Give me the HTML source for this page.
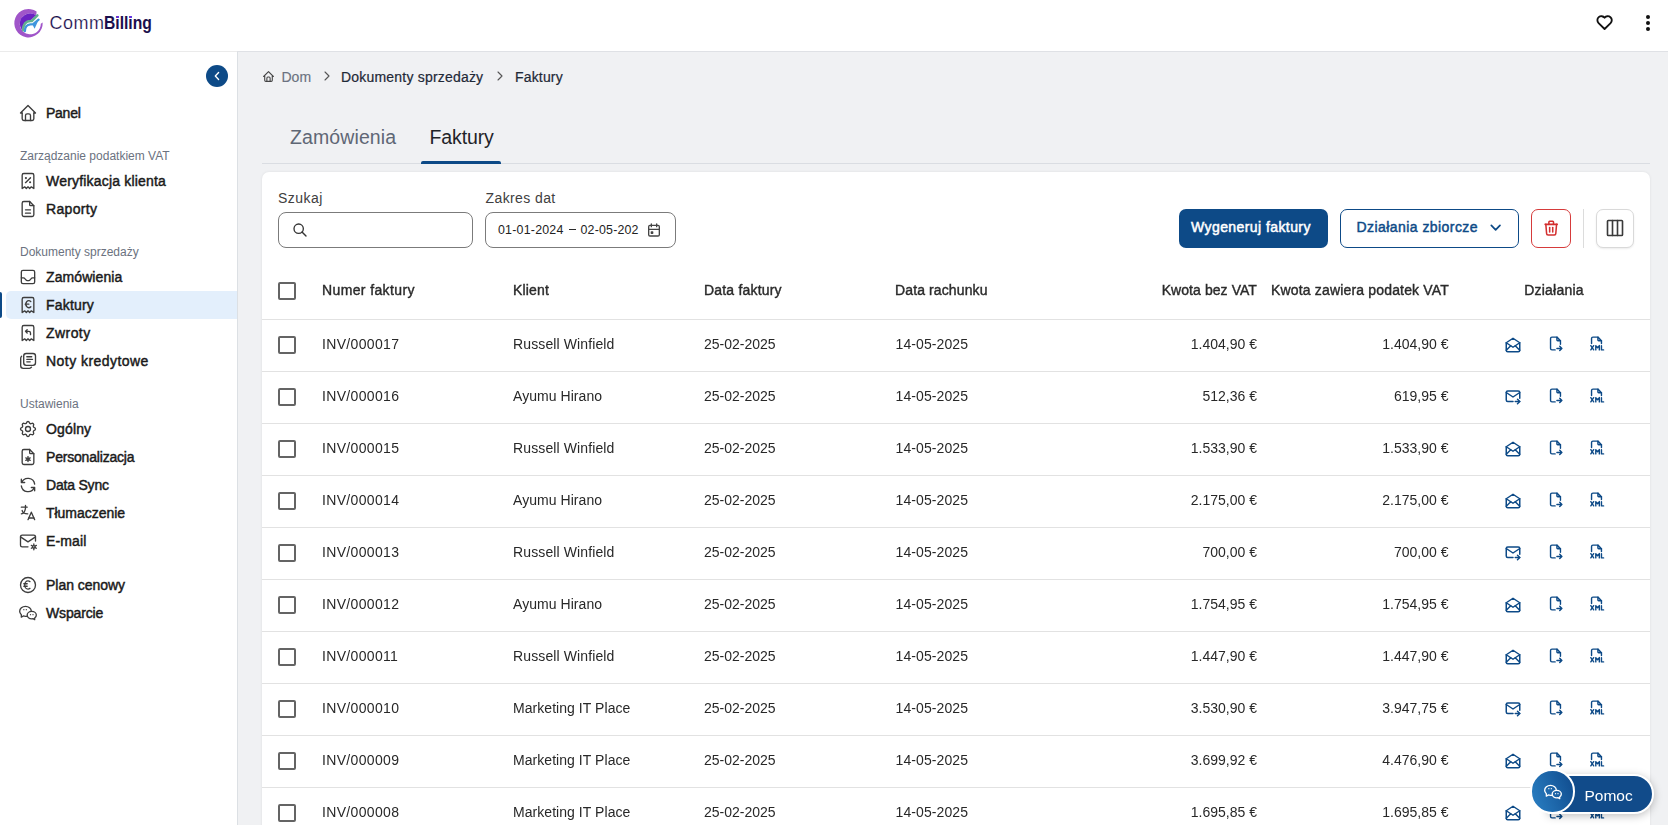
<!DOCTYPE html>
<html><head><meta charset="utf-8"><title>CommBilling - Faktury</title><style>
*{margin:0;padding:0}
html,body{width:1668px;height:825px;overflow:hidden;background:#f0f1f3;font-family:"Liberation Sans", sans-serif;position:relative}
.t{position:absolute;white-space:nowrap}
.ic{position:absolute;overflow:visible}
#hdr{position:absolute;left:0;top:0;width:1668px;height:51px;background:#fff;border-bottom:1px solid #dfe1e5}
.dot{position:absolute;width:4px;height:4px;border-radius:50%;background:#111}
#side{position:absolute;left:0;top:52px;width:237px;height:773px;background:#fff;border-right:1px solid #dce0e4}
#collapse{position:absolute;left:206px;top:65px;width:22px;height:22px;border-radius:50%;background:#0d4a87}
#active{position:absolute;left:6px;top:291px;width:231px;height:28px;background:#e3effc;border-radius:5px 0 0 5px}
#activebar{position:absolute;left:0;top:292px;width:1.5px;height:26px;background:#0d4a87;border-radius:0 2px 2px 0}
#card{position:absolute;left:262px;top:172px;width:1388px;height:700px;background:#fff;border-radius:7px;box-shadow:0 0 3px rgba(0,0,0,.08)}
.inp{position:absolute;top:212px;height:36px;box-sizing:border-box;border:1px solid #7b7b7b;border-radius:8px;background:#fff}
.btn{position:absolute;top:209px;height:39px;border-radius:7px}
.cb{position:absolute;left:278px;width:18px;height:18px;box-sizing:border-box;border:2px solid #646464;border-radius:2px}
.hl{position:absolute;left:262px;width:1388px;height:1px;background:#e2e2e2}
.xml span{position:absolute;left:0px;top:8px;font-size:8px;line-height:9px;font-weight:bold;color:#0d4a87;letter-spacing:-0.6px}
#pomoc{position:absolute;left:1548px;top:774px;width:101.5px;height:36px;border-radius:0 20px 20px 0;background:#114b8a;border:2px solid #fff;box-shadow:0 2px 8px rgba(0,0,0,.25)}
#pomoc span{position:absolute;left:34.5px;top:1.5px;line-height:36px;font-size:15.5px;color:#fff}
#pomocc{position:absolute;left:1530px;top:769px;width:40.5px;height:40.5px;border-radius:50%;border:2px solid #fff;background:linear-gradient(70deg,#2a80c4,#0f4a8c)}
</style></head>
<body>
<div id="hdr"></div>
<svg class="ic" style="left:10px;top:5px;width:40px;height:36px" viewBox="10 5 40 36">
<path d="M36.6 11.5 A14.2 14.2 0 1 0 42.7 22.6 L40.8 23.8 A10.5 10.5 0 1 1 36.3 15.2 Z" fill="#a055c9"/>
<path d="M36.3 15.2 A10.5 10.5 0 0 0 20.2 26.5 L22.3 31 C22.3 24.5 25.5 20.4 30.8 20.2 L36.8 14.8 Z" fill="#6b22c3"/>
<path d="M23.2 30.2 C23.2 24.5 26 21.2 30.6 21.1 L31.8 21 L37.4 15.3" stroke="#62b08f" stroke-width="2.5" stroke-linecap="round" fill="none"/>
<path d="M24.9 31.2 C25 27 27 24.6 30.3 24.4 L33.2 24.2 L38.6 19.6" stroke="#3f96dd" stroke-width="2.2" stroke-linecap="round" fill="none"/>
<path d="M38.9 19.2 L34.6 28.8 L32.4 24.6 Z" fill="#3f96dd"/>
</svg>
<div class="t" style="left:49.5px;top:10.5px;font-size:18px;line-height:24px;color:#1b0f4d;letter-spacing:0.5px;-webkit-text-stroke:0.2px #fff">Comm</div>
<div class="t" style="left:104px;top:10.5px;font-size:18px;line-height:24px;color:#1b0f4d;font-weight:bold;transform:scaleX(0.87);transform-origin:0 0">Billing</div>
<div style="position:absolute;left:116px;top:15.6px;width:2.8px;height:2.6px;border-radius:50%;background:#6a2ae0"></div><div style="position:absolute;left:129px;top:15.6px;width:2.8px;height:2.6px;border-radius:50%;background:#6a2ae0"></div>
<svg class="ic" style="left:1594.7px;top:13.3px;width:19.2px;height:19.2px" viewBox="0 0 24 24" fill="none" stroke="#111" stroke-width="2.3" stroke-linecap="round" stroke-linejoin="round"><path d="M19.5 12.572l-7.5 7.428l-7.5 -7.428a5 5 0 1 1 7.5 -6.566a5 5 0 1 1 7.5 6.572"/></svg>
<div class="dot" style="left:1646px;top:15px"></div><div class="dot" style="left:1646px;top:21px"></div><div class="dot" style="left:1646px;top:27px"></div>
<div id="side"></div><div style="position:absolute;left:0;top:51px;width:237px;height:1px;background:#ebebeb"></div>
<div id="collapse"><svg viewBox="0 0 22 22" style="position:absolute;left:0;top:0;width:22px;height:22px" fill="none" stroke="#fff" stroke-width="1.35" stroke-linecap="round" stroke-linejoin="round"><path d="M12.6 7.5L9.3 11L12.6 14.5"/></svg></div>
<div id="active"></div><div id="activebar"></div>
<svg class="ic" style="left:18px;top:103px;width:20px;height:20px" viewBox="0 0 24 24" fill="none" stroke="#3d3d3d" stroke-width="1.6" stroke-linecap="round" stroke-linejoin="round"><path d="M5 12l-2 0l9 -9l9 9l-2 0"/><path d="M5 12v7a2 2 0 0 0 2 2h10a2 2 0 0 0 2 -2v-7"/><path d="M9 21v-6a2 2 0 0 1 2 -2h2a2 2 0 0 1 2 2v6"/></svg>
<div class="t" style="left:46px;top:103.0px;font-size:14px;line-height:20px;color:#1a1a1a;font-weight:normal;-webkit-text-stroke:0.45px #1a1a1a;letter-spacing:-0.25px">Panel</div>
<svg class="ic" style="left:18px;top:171px;width:20px;height:20px" viewBox="0 0 24 24" fill="none" stroke="#3d3d3d" stroke-width="1.6" stroke-linecap="round" stroke-linejoin="round"><path d="M9 14l6 -6"/><path d="M9.5 8.5m-.5 0a.5 .5 0 1 0 1 0a.5 .5 0 1 0 -1 0"/><path d="M14.5 13.5m-.5 0a.5 .5 0 1 0 1 0a.5 .5 0 1 0 -1 0"/><path d="M5 21v-16a2 2 0 0 1 2 -2h10a2 2 0 0 1 2 2v16l-3 -2l-2 2l-2 -2l-2 2l-2 -2l-3 2"/></svg>
<div class="t" style="left:46px;top:171.0px;font-size:14px;line-height:20px;color:#1a1a1a;font-weight:normal;-webkit-text-stroke:0.45px #1a1a1a;letter-spacing:0.19px">Weryfikacja klienta</div>
<svg class="ic" style="left:18px;top:199px;width:20px;height:20px" viewBox="0 0 24 24" fill="none" stroke="#3d3d3d" stroke-width="1.6" stroke-linecap="round" stroke-linejoin="round"><path d="M14 3v4a1 1 0 0 0 1 1h4"/><path d="M17 21h-10a2 2 0 0 1 -2 -2v-14a2 2 0 0 1 2 -2h7l5 5v11a2 2 0 0 1 -2 2z"/><path d="M9 17h6"/><path d="M9 13h6"/></svg>
<div class="t" style="left:46px;top:199.0px;font-size:14px;line-height:20px;color:#1a1a1a;font-weight:normal;-webkit-text-stroke:0.45px #1a1a1a;letter-spacing:0.33px">Raporty</div>
<svg class="ic" style="left:18px;top:267px;width:20px;height:20px" viewBox="0 0 24 24" fill="none" stroke="#3d3d3d" stroke-width="1.6" stroke-linecap="round" stroke-linejoin="round"><path d="M4 6a2 2 0 0 1 2 -2h12a2 2 0 0 1 2 2v12a2 2 0 0 1 -2 2h-12a2 2 0 0 1 -2 -2z"/><path d="M4 13h2.5c1 0 1.5 .5 2 1.2l1 1.3c.4 .5 .9 .8 1.5 .8h2c.6 0 1.1 -.3 1.5 -.8l1 -1.3c.5 -.7 1 -1.2 2 -1.2h2.5"/></svg>
<div class="t" style="left:46px;top:267.0px;font-size:14px;line-height:20px;color:#1a1a1a;font-weight:normal;-webkit-text-stroke:0.45px #1a1a1a;letter-spacing:0.09px">Zamówienia</div>
<svg class="ic" style="left:18px;top:295px;width:20px;height:20px" viewBox="0 0 24 24" fill="none" stroke="#3d3d3d" stroke-width="1.6" stroke-linecap="round" stroke-linejoin="round"><path d="M5 21v-16a2 2 0 0 1 2 -2h10a2 2 0 0 1 2 2v16l-3 -2l-2 2l-2 -2l-2 2l-2 -2l-3 2"/><path d="M15.4 7.9A3.5 4.3 0 1 0 15.4 14.1"/><path d="M8.7 11H13"/></svg>
<div class="t" style="left:46px;top:295.0px;font-size:14px;line-height:20px;color:#1a1a1a;font-weight:normal;-webkit-text-stroke:0.45px #1a1a1a;letter-spacing:0.18px">Faktury</div>
<svg class="ic" style="left:18px;top:323px;width:20px;height:20px" viewBox="0 0 24 24" fill="none" stroke="#3d3d3d" stroke-width="1.6" stroke-linecap="round" stroke-linejoin="round"><path d="M5 21v-16a2 2 0 0 1 2 -2h10a2 2 0 0 1 2 2v16l-3 -2l-2 2l-2 -2l-2 2l-2 -2l-3 2"/><path d="M15 14v-2a2 2 0 0 0 -2 -2h-4l2 -2m0 4l-2 -2"/></svg>
<div class="t" style="left:46px;top:323.0px;font-size:14px;line-height:20px;color:#1a1a1a;font-weight:normal;-webkit-text-stroke:0.45px #1a1a1a;letter-spacing:0.44px">Zwroty</div>
<svg class="ic" style="left:16px;top:349px;width:24px;height:24px" viewBox="0 0 24 24" fill="none" stroke="#3d3d3d" stroke-width="1.35" stroke-linecap="round" stroke-linejoin="round"><path d="M10.2 4.5H17A2.5 2.5 0 0 1 19.5 7V13.8A2.5 2.5 0 0 1 17 16.3H10.2A2.5 2.5 0 0 1 7.7 13.8V7A2.5 2.5 0 0 1 10.2 4.5Z"/><path d="M5.6 7.2A2.6 2.6 0 0 0 4.7 9.2V16.8A2.5 2.5 0 0 0 7.2 19.3H13.1A2.5 2.5 0 0 0 15.5 18.2"/><path d="M10.8 7.7H15.7M10.8 10.3H16.5M10.8 12.8H14.2"/></svg>
<div class="t" style="left:46px;top:351.0px;font-size:14px;line-height:20px;color:#1a1a1a;font-weight:normal;-webkit-text-stroke:0.45px #1a1a1a;letter-spacing:0.45px">Noty kredytowe</div>
<svg class="ic" style="left:18px;top:419px;width:20px;height:20px" viewBox="0 0 24 24" fill="none" stroke="#3d3d3d" stroke-width="1.6" stroke-linecap="round" stroke-linejoin="round"><path d="M10.325 4.317c.426 -1.756 2.924 -1.756 3.35 0a1.724 1.724 0 0 0 2.573 1.066c1.543 -.94 3.31 .826 2.37 2.37a1.724 1.724 0 0 0 1.065 2.572c1.756 .426 1.756 2.924 0 3.35a1.724 1.724 0 0 0 -1.066 2.573c.94 1.543 -.826 3.31 -2.37 2.37a1.724 1.724 0 0 0 -2.572 1.065c-.426 1.756 -2.924 1.756 -3.35 0a1.724 1.724 0 0 0 -2.573 -1.066c-1.543 .94 -3.31 -.826 -2.37 -2.37a1.724 1.724 0 0 0 -1.065 -2.572c-1.756 -.426 -1.756 -2.924 0 -3.35a1.724 1.724 0 0 0 1.066 -2.573c-.94 -1.543 .826 -3.31 2.37 -2.37c1 .608 2.296 .07 2.572 -1.065z"/><path d="M9 12a3 3 0 1 0 6 0a3 3 0 0 0 -6 0"/></svg>
<div class="t" style="left:46px;top:419.0px;font-size:14px;line-height:20px;color:#1a1a1a;font-weight:normal;-webkit-text-stroke:0.45px #1a1a1a;letter-spacing:0.14px">Ogólny</div>
<svg class="ic" style="left:18px;top:447px;width:20px;height:20px" viewBox="0 0 24 24" fill="none" stroke="#3d3d3d" stroke-width="1.6" stroke-linecap="round" stroke-linejoin="round"><path d="M14 3v4a1 1 0 0 0 1 1h4"/><path d="M17 21h-10a2 2 0 0 1 -2 -2v-14a2 2 0 0 1 2 -2h7l5 5v11a2 2 0 0 1 -2 2z"/><path d="M12 14.5m-1.2 0a1.2 1.2 0 1 0 2.4 0a1.2 1.2 0 1 0 -2.4 0"/><path d="M12 11.5v1.5"/><path d="M12 16v1.5"/><path d="M14.6 13l-1.3 .75"/><path d="M10.7 15.25l-1.3 .75"/><path d="M14.6 16l-1.3 -.75"/><path d="M10.7 13.75l-1.3 -.75"/></svg>
<div class="t" style="left:46px;top:447.0px;font-size:14px;line-height:20px;color:#1a1a1a;font-weight:normal;-webkit-text-stroke:0.45px #1a1a1a;letter-spacing:-0.19px">Personalizacja</div>
<svg class="ic" style="left:18px;top:475px;width:20px;height:20px" viewBox="0 0 24 24" fill="none" stroke="#3d3d3d" stroke-width="1.6" stroke-linecap="round" stroke-linejoin="round"><path d="M20 11a8.1 8.1 0 0 0 -15.5 -2m-.5 -4v4h4"/><path d="M4 13a8.1 8.1 0 0 0 15.5 2m.5 4v-4h-4"/></svg>
<div class="t" style="left:46px;top:475.0px;font-size:14px;line-height:20px;color:#1a1a1a;font-weight:normal;-webkit-text-stroke:0.45px #1a1a1a;letter-spacing:-0.2px">Data Sync</div>
<svg class="ic" style="left:18px;top:503px;width:20px;height:20px" viewBox="0 0 24 24" fill="none" stroke="#3d3d3d" stroke-width="1.6" stroke-linecap="round" stroke-linejoin="round"><path d="M4 5h7"/><path d="M9 3v2c0 4.418 -2.239 8 -5 8"/><path d="M5 9c0 2.144 2.952 3.908 6.7 4"/><path d="M12 20l4 -9l4 9"/><path d="M19.1 18h-6.2"/></svg>
<div class="t" style="left:46px;top:503.0px;font-size:14px;line-height:20px;color:#1a1a1a;font-weight:normal;-webkit-text-stroke:0.45px #1a1a1a;letter-spacing:-0.03px">Tłumaczenie</div>
<svg class="ic" style="left:18px;top:531px;width:20px;height:20px" viewBox="0 0 24 24" fill="none" stroke="#3d3d3d" stroke-width="1.6" stroke-linecap="round" stroke-linejoin="round"><path d="M12 19h-7a2 2 0 0 1 -2 -2v-10a2 2 0 0 1 2 -2h14a2 2 0 0 1 2 2v5"/><path d="M3 7l9 6l9 -6"/><path d="M19 19m-1.5 0a1.5 1.5 0 1 0 3 0a1.5 1.5 0 1 0 -3 0"/><path d="M19 15.5v1.5"/><path d="M19 21v1.5"/><path d="M22 17.25l-1.3 .75"/><path d="M17.3 20l-1.3 .75"/><path d="M16 17.25l1.3 .75"/><path d="M20.7 20l1.3 .75"/></svg>
<div class="t" style="left:46px;top:531.0px;font-size:14px;line-height:20px;color:#1a1a1a;font-weight:normal;-webkit-text-stroke:0.45px #1a1a1a;letter-spacing:0.14px">E-mail</div>
<svg class="ic" style="left:18px;top:575px;width:20px;height:20px" viewBox="0 0 24 24" fill="none" stroke="#3d3d3d" stroke-width="1.6" stroke-linecap="round" stroke-linejoin="round"><path d="M12 12m-9 0a9 9 0 1 0 18 0a9 9 0 1 0 -18 0"/><path d="M14.4 8c-.67 -.63 -1.5 -1 -2.4 -1c-2.21 0 -4 2.239 -4 5s1.79 5 4 5c.9 0 1.73 -.37 2.4 -1"/><path d="M7 10.5h4"/><path d="M7 13.5h4"/></svg>
<div class="t" style="left:46px;top:575.0px;font-size:14px;line-height:20px;color:#1a1a1a;font-weight:normal;-webkit-text-stroke:0.45px #1a1a1a;letter-spacing:-0.03px">Plan cenowy</div>
<svg class="ic" style="left:18px;top:603px;width:20px;height:20px" viewBox="0 0 24 24" fill="none" stroke="#3d3d3d" stroke-width="1.6" stroke-linecap="round" stroke-linejoin="round"><path d="M16.5 10c3.038 0 5.5 2.015 5.5 4.5c0 1.397 -.778 2.645 -2 3.47l0 2.03l-1.964 -1.178a6.649 6.649 0 0 1 -1.536 .178c-3.038 0 -5.5 -2.015 -5.5 -4.5s2.462 -4.5 5.5 -4.5z"/><path d="M11.197 15.698c-.69 .196 -1.43 .302 -2.197 .302a8.008 8.008 0 0 1 -2.612 -.432l-2.388 1.432v-2.801c-1.237 -1.082 -2 -2.564 -2 -4.199c0 -3.314 3.134 -6 7 -6c3.782 0 6.863 2.57 7 5.785l0 .233"/><path d="M10 8h.01"/><path d="M7 8h.01"/><path d="M15 14h.01"/><path d="M18 14h.01"/></svg>
<div class="t" style="left:46px;top:603.0px;font-size:14px;line-height:20px;color:#1a1a1a;font-weight:normal;-webkit-text-stroke:0.45px #1a1a1a;letter-spacing:-0.14px">Wsparcie</div>
<div class="t" style="left:20px;top:148.0px;font-size:12px;line-height:16px;color:#6b7280;font-weight:normal;">Zarządzanie podatkiem VAT</div>
<div class="t" style="left:20px;top:244.0px;font-size:12px;line-height:16px;color:#6b7280;font-weight:normal;">Dokumenty sprzedaży</div>
<div class="t" style="left:20px;top:396.0px;font-size:12px;line-height:16px;color:#6b7280;font-weight:normal;">Ustawienia</div>
<svg class="ic" style="left:261.5px;top:69.5px;width:13px;height:13px" viewBox="0 0 24 24" fill="none" stroke="#444" stroke-width="2" stroke-linecap="round" stroke-linejoin="round"><path d="M5 12l-2 0l9 -9l9 9l-2 0"/><path d="M5 12v7a2 2 0 0 0 2 2h10a2 2 0 0 0 2 -2v-7"/><path d="M9 21v-6a2 2 0 0 1 2 -2h2a2 2 0 0 1 2 2v6"/></svg>
<div class="t" style="left:281.5px;top:66.5px;font-size:14px;line-height:20px;color:#6b7280;font-weight:normal;-webkit-text-stroke:0.15px #6b7280">Dom</div>
<svg class="ic" style="left:318.5px;top:68px;width:16px;height:16px" viewBox="0 0 24 24" fill="none" stroke="#555" stroke-width="1.6" stroke-linecap="round" stroke-linejoin="round"><path d="M9 6l6 6l-6 6"/></svg>
<div class="t" style="left:341px;top:66.5px;font-size:14px;line-height:20px;color:#1f2937;font-weight:normal;letter-spacing:0.2px;-webkit-text-stroke:0.2px #1f2937">Dokumenty sprzedaży</div>
<svg class="ic" style="left:491.5px;top:68px;width:16px;height:16px" viewBox="0 0 24 24" fill="none" stroke="#555" stroke-width="1.6" stroke-linecap="round" stroke-linejoin="round"><path d="M9 6l6 6l-6 6"/></svg>
<div class="t" style="left:515px;top:66.5px;font-size:14px;line-height:20px;color:#1f2937;font-weight:normal;letter-spacing:0.17px;-webkit-text-stroke:0.2px #1f2937">Faktury</div>
<div style="position:absolute;left:262px;top:163px;width:1388px;height:1px;background:#dadde2"></div>
<div class="t" style="left:290px;top:124.0px;font-size:19.5px;line-height:26px;color:#5f6775;font-weight:normal;letter-spacing:0.11px">Zamówienia</div>
<div class="t" style="left:429.5px;top:124.0px;font-size:19.5px;line-height:26px;color:#1f2328;font-weight:normal;letter-spacing:-0.12px">Faktury</div>
<div style="position:absolute;left:421px;top:161px;width:80px;height:3px;background:#0d4a87;border-radius:2px 2px 0 0"></div>
<div id="card"></div>
<div class="t" style="left:278px;top:188.0px;font-size:14px;line-height:20px;color:#404040;font-weight:normal;letter-spacing:0.46px">Szukaj</div>
<div class="inp" style="left:278px;width:195px"></div>
<svg class="ic" style="left:292px;top:222px;width:16px;height:16px" viewBox="0 0 24 24" fill="none" stroke="#333" stroke-width="2" stroke-linecap="round" stroke-linejoin="round"><path d="M10 10m-7 0a7 7 0 1 0 14 0a7 7 0 1 0 -14 0"/><path d="M21 21l-6 -6"/></svg>
<div class="t" style="left:485.5px;top:188.0px;font-size:14px;line-height:20px;color:#404040;font-weight:normal;letter-spacing:0.4px">Zakres dat</div>
<div class="inp" style="left:485px;width:191px"></div>
<div class="t" style="left:498px;top:220.5px;font-size:12.4px;line-height:18px;color:#222;font-weight:normal;letter-spacing:0.22px">01-01-2024</div>
<div style="position:absolute;left:568.5px;top:228.6px;width:7.5px;height:1.4px;background:#2a2a2a"></div>
<div class="t" style="left:580.5px;top:220.5px;font-size:12.4px;line-height:18px;color:#222;font-weight:normal;letter-spacing:0.19px">02-05-202</div>
<svg class="ic" style="left:646px;top:222px;width:16px;height:16px" viewBox="0 0 24 24" fill="none" stroke="#444" stroke-width="2" stroke-linecap="round" stroke-linejoin="round"><path d="M4 7a2 2 0 0 1 2 -2h12a2 2 0 0 1 2 2v12a2 2 0 0 1 -2 2h-12a2 2 0 0 1 -2 -2z"/><path d="M16 3l0 4"/><path d="M8 3l0 4"/><path d="M4 11l16 0"/><path d="M8 15h2v2h-2z"/></svg>
<div class="btn" style="left:1179px;width:149px;background:#0d4a87"></div>
<div class="t" style="left:1191px;top:217.0px;font-size:14px;line-height:20px;color:#fff;font-weight:normal;letter-spacing:0.42px;-webkit-text-stroke:0.5px #fff">Wygeneruj faktury</div>
<div class="btn" style="left:1340px;width:179px;border:1.3px solid #0d4a87;box-sizing:border-box;background:#fff"></div>
<div class="t" style="left:1356.5px;top:217.0px;font-size:14px;line-height:20px;color:#0d4a87;font-weight:normal;letter-spacing:0.44px;-webkit-text-stroke:0.45px #0d4a87">Działania zbiorcze</div>
<svg class="ic" style="left:1487.4px;top:219.2px;width:17.3px;height:17.3px" viewBox="0 0 24 24" fill="none" stroke="#0d4a87" stroke-width="2.4" stroke-linecap="round" stroke-linejoin="round"><path d="M6 9l6 6l6 -6"/></svg>
<div class="btn" style="left:1531px;width:40px;border:1px solid #d63b3b;box-sizing:border-box;background:#fff"></div>
<svg class="ic" style="left:1541.8px;top:218.8px;width:18.4px;height:18.4px" viewBox="0 0 24 24" fill="none" stroke="#d32f2f" stroke-width="2" stroke-linecap="round" stroke-linejoin="round"><path d="M4 7l16 0"/><path d="M10 11l0 6"/><path d="M14 11l0 6"/><path d="M5 7l1 12a2 2 0 0 0 2 2h8a2 2 0 0 0 2 -2l1 -12"/><path d="M9 7v-3a1 1 0 0 1 1 -1h4a1 1 0 0 1 1 1v3"/></svg>
<div style="position:absolute;left:1583px;top:209px;width:1px;height:39px;background:#dcdcdc"></div>
<div class="btn" style="left:1596px;width:38px;border:1px solid #d9d9d9;box-sizing:border-box;background:#fff;box-shadow:0 1px 2px rgba(0,0,0,.08)"></div>
<svg class="ic" style="left:1605.1px;top:218.2px;width:20px;height:20px" viewBox="0 0 24 24" fill="none" stroke="#3a3a3a" stroke-width="1.95" stroke-linecap="round" stroke-linejoin="round"><path d="M4 3h16a1 1 0 0 1 1 1v16a1 1 0 0 1 -1 1h-16a1 1 0 0 1 -1 -1v-16a1 1 0 0 1 1 -1z"/><path d="M9 3v18"/><path d="M15 3v18"/></svg>
<div style="position:absolute;left:0;top:0;width:1668px;height:825px;will-change:transform">
<div class="cb" style="top:282px"></div>
<div class="t" style="left:322px;top:280.0px;font-size:14px;line-height:20px;color:#2b2b2b;font-weight:normal;-webkit-text-stroke:0.4px #2b2b2b;letter-spacing:0.38px">Numer faktury</div>
<div class="t" style="left:513px;top:280.0px;font-size:14px;line-height:20px;color:#2b2b2b;font-weight:normal;-webkit-text-stroke:0.4px #2b2b2b;letter-spacing:0.18px">Klient</div>
<div class="t" style="left:704px;top:280.0px;font-size:14px;line-height:20px;color:#2b2b2b;font-weight:normal;-webkit-text-stroke:0.4px #2b2b2b;letter-spacing:0.19px">Data faktury</div>
<div class="t" style="left:895px;top:280.0px;font-size:14px;line-height:20px;color:#2b2b2b;font-weight:normal;-webkit-text-stroke:0.4px #2b2b2b;letter-spacing:0.12px">Data rachunku</div>
<div class="t" style="right:411px;top:280.0px;font-size:14px;line-height:20px;color:#2b2b2b;font-weight:normal;-webkit-text-stroke:0.4px #2b2b2b;letter-spacing:0.07px">Kwota bez VAT</div>
<div class="t" style="right:219px;top:280.0px;font-size:14px;line-height:20px;color:#2b2b2b;font-weight:normal;-webkit-text-stroke:0.4px #2b2b2b;letter-spacing:0.17px">Kwota zawiera podatek VAT</div>
<div class="t" style="left:1404px;width:300px;text-align:center;top:280.0px;font-size:14px;line-height:20px;color:#2b2b2b;font-weight:normal;-webkit-text-stroke:0.4px #2b2b2b;letter-spacing:0.22px">Działania</div>
<div class="hl" style="top:319px"></div>
<div class="cb" style="top:336px"></div>
<div class="t" style="left:322px;top:334.0px;font-size:14px;line-height:20px;color:#282828;font-weight:normal;letter-spacing:0.33px">INV/000017</div>
<div class="t" style="left:513px;top:334.0px;font-size:14px;line-height:20px;color:#282828;font-weight:normal;letter-spacing:0.12px">Russell Winfield</div>
<div class="t" style="left:704px;top:334.0px;font-size:14px;line-height:20px;color:#282828;font-weight:normal;">25-02-2025</div>
<div class="t" style="left:895.5px;top:334.0px;font-size:14px;line-height:20px;color:#282828;font-weight:normal;letter-spacing:0.1px">14-05-2025</div>
<div class="t" style="right:411px;top:334.0px;font-size:14px;line-height:20px;color:#282828;font-weight:normal;">1.404,90 €</div>
<div class="t" style="right:219.5px;top:334.0px;font-size:14px;line-height:20px;color:#282828;font-weight:normal;">1.404,90 €</div>
<svg class="ic" style="left:1504px;top:336px;width:18px;height:18px" viewBox="0 0 24 24" fill="none" stroke="#0d4a87" stroke-width="2" stroke-linecap="round" stroke-linejoin="round"><path d="M3 9l9 6l9 -6l-9 -6l-9 6"/><path d="M21 9v10a2 2 0 0 1 -2 2h-14a2 2 0 0 1 -2 -2v-10"/><path d="M3 19l6 -6"/><path d="M15 13l6 6"/></svg>
<svg class="ic" style="left:1547.1px;top:334.7px;width:17px;height:17px" viewBox="0 0 24 24" fill="none" stroke="#0d4a87" stroke-width="2" stroke-linecap="round" stroke-linejoin="round"><path d="M14 3v4a1 1 0 0 0 1 1h4"/><path d="M11.5 21h-4.5a2 2 0 0 1 -2 -2v-14a2 2 0 0 1 2 -2h7l5 5v5m-5 6h7m-3 -3l3 3l-3 3"/></svg>
<svg class="ic" style="left:1588.2px;top:334.7px;width:17px;height:17px" viewBox="0 0 24 24" fill="none" stroke="#0d4a87" stroke-width="2" stroke-linecap="round" stroke-linejoin="round"><path d="M14 3v4a1 1 0 0 0 1 1h4"/><path d="M5 12v-7a2 2 0 0 1 2 -2h7l5 5v4"/><path d="M4 15l4 6"/><path d="M4 21l4 -6"/><path d="M19 15v6h3"/><path d="M11 21v-6l2.5 3l2.5 -3v6"/></svg>
<div class="hl" style="top:371px"></div>
<div class="cb" style="top:388px"></div>
<div class="t" style="left:322px;top:386.0px;font-size:14px;line-height:20px;color:#282828;font-weight:normal;letter-spacing:0.33px">INV/000016</div>
<div class="t" style="left:513px;top:386.0px;font-size:14px;line-height:20px;color:#282828;font-weight:normal;letter-spacing:0.05px">Ayumu Hirano</div>
<div class="t" style="left:704px;top:386.0px;font-size:14px;line-height:20px;color:#282828;font-weight:normal;">25-02-2025</div>
<div class="t" style="left:895.5px;top:386.0px;font-size:14px;line-height:20px;color:#282828;font-weight:normal;letter-spacing:0.1px">14-05-2025</div>
<div class="t" style="right:411px;top:386.0px;font-size:14px;line-height:20px;color:#282828;font-weight:normal;">512,36 €</div>
<div class="t" style="right:219.5px;top:386.0px;font-size:14px;line-height:20px;color:#282828;font-weight:normal;">619,95 €</div>
<svg class="ic" style="left:1504px;top:388px;width:18px;height:18px" viewBox="0 0 24 24" fill="none" stroke="#0d4a87" stroke-width="2" stroke-linecap="round" stroke-linejoin="round"><path d="M12 18h-7a2 2 0 0 1 -2 -2v-10a2 2 0 0 1 2 -2h14a2 2 0 0 1 2 2v7.5"/><path d="M3 6l9 6l9 -6"/><path d="M15 18h6"/><path d="M18 15l3 3l-3 3"/></svg>
<svg class="ic" style="left:1547.1px;top:386.7px;width:17px;height:17px" viewBox="0 0 24 24" fill="none" stroke="#0d4a87" stroke-width="2" stroke-linecap="round" stroke-linejoin="round"><path d="M14 3v4a1 1 0 0 0 1 1h4"/><path d="M11.5 21h-4.5a2 2 0 0 1 -2 -2v-14a2 2 0 0 1 2 -2h7l5 5v5m-5 6h7m-3 -3l3 3l-3 3"/></svg>
<svg class="ic" style="left:1588.2px;top:386.7px;width:17px;height:17px" viewBox="0 0 24 24" fill="none" stroke="#0d4a87" stroke-width="2" stroke-linecap="round" stroke-linejoin="round"><path d="M14 3v4a1 1 0 0 0 1 1h4"/><path d="M5 12v-7a2 2 0 0 1 2 -2h7l5 5v4"/><path d="M4 15l4 6"/><path d="M4 21l4 -6"/><path d="M19 15v6h3"/><path d="M11 21v-6l2.5 3l2.5 -3v6"/></svg>
<div class="hl" style="top:423px"></div>
<div class="cb" style="top:440px"></div>
<div class="t" style="left:322px;top:438.0px;font-size:14px;line-height:20px;color:#282828;font-weight:normal;letter-spacing:0.33px">INV/000015</div>
<div class="t" style="left:513px;top:438.0px;font-size:14px;line-height:20px;color:#282828;font-weight:normal;letter-spacing:0.12px">Russell Winfield</div>
<div class="t" style="left:704px;top:438.0px;font-size:14px;line-height:20px;color:#282828;font-weight:normal;">25-02-2025</div>
<div class="t" style="left:895.5px;top:438.0px;font-size:14px;line-height:20px;color:#282828;font-weight:normal;letter-spacing:0.1px">14-05-2025</div>
<div class="t" style="right:411px;top:438.0px;font-size:14px;line-height:20px;color:#282828;font-weight:normal;">1.533,90 €</div>
<div class="t" style="right:219.5px;top:438.0px;font-size:14px;line-height:20px;color:#282828;font-weight:normal;">1.533,90 €</div>
<svg class="ic" style="left:1504px;top:440px;width:18px;height:18px" viewBox="0 0 24 24" fill="none" stroke="#0d4a87" stroke-width="2" stroke-linecap="round" stroke-linejoin="round"><path d="M3 9l9 6l9 -6l-9 -6l-9 6"/><path d="M21 9v10a2 2 0 0 1 -2 2h-14a2 2 0 0 1 -2 -2v-10"/><path d="M3 19l6 -6"/><path d="M15 13l6 6"/></svg>
<svg class="ic" style="left:1547.1px;top:438.7px;width:17px;height:17px" viewBox="0 0 24 24" fill="none" stroke="#0d4a87" stroke-width="2" stroke-linecap="round" stroke-linejoin="round"><path d="M14 3v4a1 1 0 0 0 1 1h4"/><path d="M11.5 21h-4.5a2 2 0 0 1 -2 -2v-14a2 2 0 0 1 2 -2h7l5 5v5m-5 6h7m-3 -3l3 3l-3 3"/></svg>
<svg class="ic" style="left:1588.2px;top:438.7px;width:17px;height:17px" viewBox="0 0 24 24" fill="none" stroke="#0d4a87" stroke-width="2" stroke-linecap="round" stroke-linejoin="round"><path d="M14 3v4a1 1 0 0 0 1 1h4"/><path d="M5 12v-7a2 2 0 0 1 2 -2h7l5 5v4"/><path d="M4 15l4 6"/><path d="M4 21l4 -6"/><path d="M19 15v6h3"/><path d="M11 21v-6l2.5 3l2.5 -3v6"/></svg>
<div class="hl" style="top:475px"></div>
<div class="cb" style="top:492px"></div>
<div class="t" style="left:322px;top:490.0px;font-size:14px;line-height:20px;color:#282828;font-weight:normal;letter-spacing:0.33px">INV/000014</div>
<div class="t" style="left:513px;top:490.0px;font-size:14px;line-height:20px;color:#282828;font-weight:normal;letter-spacing:0.05px">Ayumu Hirano</div>
<div class="t" style="left:704px;top:490.0px;font-size:14px;line-height:20px;color:#282828;font-weight:normal;">25-02-2025</div>
<div class="t" style="left:895.5px;top:490.0px;font-size:14px;line-height:20px;color:#282828;font-weight:normal;letter-spacing:0.1px">14-05-2025</div>
<div class="t" style="right:411px;top:490.0px;font-size:14px;line-height:20px;color:#282828;font-weight:normal;">2.175,00 €</div>
<div class="t" style="right:219.5px;top:490.0px;font-size:14px;line-height:20px;color:#282828;font-weight:normal;">2.175,00 €</div>
<svg class="ic" style="left:1504px;top:492px;width:18px;height:18px" viewBox="0 0 24 24" fill="none" stroke="#0d4a87" stroke-width="2" stroke-linecap="round" stroke-linejoin="round"><path d="M3 9l9 6l9 -6l-9 -6l-9 6"/><path d="M21 9v10a2 2 0 0 1 -2 2h-14a2 2 0 0 1 -2 -2v-10"/><path d="M3 19l6 -6"/><path d="M15 13l6 6"/></svg>
<svg class="ic" style="left:1547.1px;top:490.7px;width:17px;height:17px" viewBox="0 0 24 24" fill="none" stroke="#0d4a87" stroke-width="2" stroke-linecap="round" stroke-linejoin="round"><path d="M14 3v4a1 1 0 0 0 1 1h4"/><path d="M11.5 21h-4.5a2 2 0 0 1 -2 -2v-14a2 2 0 0 1 2 -2h7l5 5v5m-5 6h7m-3 -3l3 3l-3 3"/></svg>
<svg class="ic" style="left:1588.2px;top:490.7px;width:17px;height:17px" viewBox="0 0 24 24" fill="none" stroke="#0d4a87" stroke-width="2" stroke-linecap="round" stroke-linejoin="round"><path d="M14 3v4a1 1 0 0 0 1 1h4"/><path d="M5 12v-7a2 2 0 0 1 2 -2h7l5 5v4"/><path d="M4 15l4 6"/><path d="M4 21l4 -6"/><path d="M19 15v6h3"/><path d="M11 21v-6l2.5 3l2.5 -3v6"/></svg>
<div class="hl" style="top:527px"></div>
<div class="cb" style="top:544px"></div>
<div class="t" style="left:322px;top:542.0px;font-size:14px;line-height:20px;color:#282828;font-weight:normal;letter-spacing:0.33px">INV/000013</div>
<div class="t" style="left:513px;top:542.0px;font-size:14px;line-height:20px;color:#282828;font-weight:normal;letter-spacing:0.12px">Russell Winfield</div>
<div class="t" style="left:704px;top:542.0px;font-size:14px;line-height:20px;color:#282828;font-weight:normal;">25-02-2025</div>
<div class="t" style="left:895.5px;top:542.0px;font-size:14px;line-height:20px;color:#282828;font-weight:normal;letter-spacing:0.1px">14-05-2025</div>
<div class="t" style="right:411px;top:542.0px;font-size:14px;line-height:20px;color:#282828;font-weight:normal;">700,00 €</div>
<div class="t" style="right:219.5px;top:542.0px;font-size:14px;line-height:20px;color:#282828;font-weight:normal;">700,00 €</div>
<svg class="ic" style="left:1504px;top:544px;width:18px;height:18px" viewBox="0 0 24 24" fill="none" stroke="#0d4a87" stroke-width="2" stroke-linecap="round" stroke-linejoin="round"><path d="M12 18h-7a2 2 0 0 1 -2 -2v-10a2 2 0 0 1 2 -2h14a2 2 0 0 1 2 2v7.5"/><path d="M3 6l9 6l9 -6"/><path d="M15 18h6"/><path d="M18 15l3 3l-3 3"/></svg>
<svg class="ic" style="left:1547.1px;top:542.7px;width:17px;height:17px" viewBox="0 0 24 24" fill="none" stroke="#0d4a87" stroke-width="2" stroke-linecap="round" stroke-linejoin="round"><path d="M14 3v4a1 1 0 0 0 1 1h4"/><path d="M11.5 21h-4.5a2 2 0 0 1 -2 -2v-14a2 2 0 0 1 2 -2h7l5 5v5m-5 6h7m-3 -3l3 3l-3 3"/></svg>
<svg class="ic" style="left:1588.2px;top:542.7px;width:17px;height:17px" viewBox="0 0 24 24" fill="none" stroke="#0d4a87" stroke-width="2" stroke-linecap="round" stroke-linejoin="round"><path d="M14 3v4a1 1 0 0 0 1 1h4"/><path d="M5 12v-7a2 2 0 0 1 2 -2h7l5 5v4"/><path d="M4 15l4 6"/><path d="M4 21l4 -6"/><path d="M19 15v6h3"/><path d="M11 21v-6l2.5 3l2.5 -3v6"/></svg>
<div class="hl" style="top:579px"></div>
<div class="cb" style="top:596px"></div>
<div class="t" style="left:322px;top:594.0px;font-size:14px;line-height:20px;color:#282828;font-weight:normal;letter-spacing:0.33px">INV/000012</div>
<div class="t" style="left:513px;top:594.0px;font-size:14px;line-height:20px;color:#282828;font-weight:normal;letter-spacing:0.05px">Ayumu Hirano</div>
<div class="t" style="left:704px;top:594.0px;font-size:14px;line-height:20px;color:#282828;font-weight:normal;">25-02-2025</div>
<div class="t" style="left:895.5px;top:594.0px;font-size:14px;line-height:20px;color:#282828;font-weight:normal;letter-spacing:0.1px">14-05-2025</div>
<div class="t" style="right:411px;top:594.0px;font-size:14px;line-height:20px;color:#282828;font-weight:normal;">1.754,95 €</div>
<div class="t" style="right:219.5px;top:594.0px;font-size:14px;line-height:20px;color:#282828;font-weight:normal;">1.754,95 €</div>
<svg class="ic" style="left:1504px;top:596px;width:18px;height:18px" viewBox="0 0 24 24" fill="none" stroke="#0d4a87" stroke-width="2" stroke-linecap="round" stroke-linejoin="round"><path d="M3 9l9 6l9 -6l-9 -6l-9 6"/><path d="M21 9v10a2 2 0 0 1 -2 2h-14a2 2 0 0 1 -2 -2v-10"/><path d="M3 19l6 -6"/><path d="M15 13l6 6"/></svg>
<svg class="ic" style="left:1547.1px;top:594.7px;width:17px;height:17px" viewBox="0 0 24 24" fill="none" stroke="#0d4a87" stroke-width="2" stroke-linecap="round" stroke-linejoin="round"><path d="M14 3v4a1 1 0 0 0 1 1h4"/><path d="M11.5 21h-4.5a2 2 0 0 1 -2 -2v-14a2 2 0 0 1 2 -2h7l5 5v5m-5 6h7m-3 -3l3 3l-3 3"/></svg>
<svg class="ic" style="left:1588.2px;top:594.7px;width:17px;height:17px" viewBox="0 0 24 24" fill="none" stroke="#0d4a87" stroke-width="2" stroke-linecap="round" stroke-linejoin="round"><path d="M14 3v4a1 1 0 0 0 1 1h4"/><path d="M5 12v-7a2 2 0 0 1 2 -2h7l5 5v4"/><path d="M4 15l4 6"/><path d="M4 21l4 -6"/><path d="M19 15v6h3"/><path d="M11 21v-6l2.5 3l2.5 -3v6"/></svg>
<div class="hl" style="top:631px"></div>
<div class="cb" style="top:648px"></div>
<div class="t" style="left:322px;top:646.0px;font-size:14px;line-height:20px;color:#282828;font-weight:normal;letter-spacing:0.33px">INV/000011</div>
<div class="t" style="left:513px;top:646.0px;font-size:14px;line-height:20px;color:#282828;font-weight:normal;letter-spacing:0.12px">Russell Winfield</div>
<div class="t" style="left:704px;top:646.0px;font-size:14px;line-height:20px;color:#282828;font-weight:normal;">25-02-2025</div>
<div class="t" style="left:895.5px;top:646.0px;font-size:14px;line-height:20px;color:#282828;font-weight:normal;letter-spacing:0.1px">14-05-2025</div>
<div class="t" style="right:411px;top:646.0px;font-size:14px;line-height:20px;color:#282828;font-weight:normal;">1.447,90 €</div>
<div class="t" style="right:219.5px;top:646.0px;font-size:14px;line-height:20px;color:#282828;font-weight:normal;">1.447,90 €</div>
<svg class="ic" style="left:1504px;top:648px;width:18px;height:18px" viewBox="0 0 24 24" fill="none" stroke="#0d4a87" stroke-width="2" stroke-linecap="round" stroke-linejoin="round"><path d="M3 9l9 6l9 -6l-9 -6l-9 6"/><path d="M21 9v10a2 2 0 0 1 -2 2h-14a2 2 0 0 1 -2 -2v-10"/><path d="M3 19l6 -6"/><path d="M15 13l6 6"/></svg>
<svg class="ic" style="left:1547.1px;top:646.7px;width:17px;height:17px" viewBox="0 0 24 24" fill="none" stroke="#0d4a87" stroke-width="2" stroke-linecap="round" stroke-linejoin="round"><path d="M14 3v4a1 1 0 0 0 1 1h4"/><path d="M11.5 21h-4.5a2 2 0 0 1 -2 -2v-14a2 2 0 0 1 2 -2h7l5 5v5m-5 6h7m-3 -3l3 3l-3 3"/></svg>
<svg class="ic" style="left:1588.2px;top:646.7px;width:17px;height:17px" viewBox="0 0 24 24" fill="none" stroke="#0d4a87" stroke-width="2" stroke-linecap="round" stroke-linejoin="round"><path d="M14 3v4a1 1 0 0 0 1 1h4"/><path d="M5 12v-7a2 2 0 0 1 2 -2h7l5 5v4"/><path d="M4 15l4 6"/><path d="M4 21l4 -6"/><path d="M19 15v6h3"/><path d="M11 21v-6l2.5 3l2.5 -3v6"/></svg>
<div class="hl" style="top:683px"></div>
<div class="cb" style="top:700px"></div>
<div class="t" style="left:322px;top:698.0px;font-size:14px;line-height:20px;color:#282828;font-weight:normal;letter-spacing:0.33px">INV/000010</div>
<div class="t" style="left:513px;top:698.0px;font-size:14px;line-height:20px;color:#282828;font-weight:normal;letter-spacing:0.05px">Marketing IT Place</div>
<div class="t" style="left:704px;top:698.0px;font-size:14px;line-height:20px;color:#282828;font-weight:normal;">25-02-2025</div>
<div class="t" style="left:895.5px;top:698.0px;font-size:14px;line-height:20px;color:#282828;font-weight:normal;letter-spacing:0.1px">14-05-2025</div>
<div class="t" style="right:411px;top:698.0px;font-size:14px;line-height:20px;color:#282828;font-weight:normal;">3.530,90 €</div>
<div class="t" style="right:219.5px;top:698.0px;font-size:14px;line-height:20px;color:#282828;font-weight:normal;">3.947,75 €</div>
<svg class="ic" style="left:1504px;top:700px;width:18px;height:18px" viewBox="0 0 24 24" fill="none" stroke="#0d4a87" stroke-width="2" stroke-linecap="round" stroke-linejoin="round"><path d="M12 18h-7a2 2 0 0 1 -2 -2v-10a2 2 0 0 1 2 -2h14a2 2 0 0 1 2 2v7.5"/><path d="M3 6l9 6l9 -6"/><path d="M15 18h6"/><path d="M18 15l3 3l-3 3"/></svg>
<svg class="ic" style="left:1547.1px;top:698.7px;width:17px;height:17px" viewBox="0 0 24 24" fill="none" stroke="#0d4a87" stroke-width="2" stroke-linecap="round" stroke-linejoin="round"><path d="M14 3v4a1 1 0 0 0 1 1h4"/><path d="M11.5 21h-4.5a2 2 0 0 1 -2 -2v-14a2 2 0 0 1 2 -2h7l5 5v5m-5 6h7m-3 -3l3 3l-3 3"/></svg>
<svg class="ic" style="left:1588.2px;top:698.7px;width:17px;height:17px" viewBox="0 0 24 24" fill="none" stroke="#0d4a87" stroke-width="2" stroke-linecap="round" stroke-linejoin="round"><path d="M14 3v4a1 1 0 0 0 1 1h4"/><path d="M5 12v-7a2 2 0 0 1 2 -2h7l5 5v4"/><path d="M4 15l4 6"/><path d="M4 21l4 -6"/><path d="M19 15v6h3"/><path d="M11 21v-6l2.5 3l2.5 -3v6"/></svg>
<div class="hl" style="top:735px"></div>
<div class="cb" style="top:752px"></div>
<div class="t" style="left:322px;top:750.0px;font-size:14px;line-height:20px;color:#282828;font-weight:normal;letter-spacing:0.33px">INV/000009</div>
<div class="t" style="left:513px;top:750.0px;font-size:14px;line-height:20px;color:#282828;font-weight:normal;letter-spacing:0.05px">Marketing IT Place</div>
<div class="t" style="left:704px;top:750.0px;font-size:14px;line-height:20px;color:#282828;font-weight:normal;">25-02-2025</div>
<div class="t" style="left:895.5px;top:750.0px;font-size:14px;line-height:20px;color:#282828;font-weight:normal;letter-spacing:0.1px">14-05-2025</div>
<div class="t" style="right:411px;top:750.0px;font-size:14px;line-height:20px;color:#282828;font-weight:normal;">3.699,92 €</div>
<div class="t" style="right:219.5px;top:750.0px;font-size:14px;line-height:20px;color:#282828;font-weight:normal;">4.476,90 €</div>
<svg class="ic" style="left:1504px;top:752px;width:18px;height:18px" viewBox="0 0 24 24" fill="none" stroke="#0d4a87" stroke-width="2" stroke-linecap="round" stroke-linejoin="round"><path d="M3 9l9 6l9 -6l-9 -6l-9 6"/><path d="M21 9v10a2 2 0 0 1 -2 2h-14a2 2 0 0 1 -2 -2v-10"/><path d="M3 19l6 -6"/><path d="M15 13l6 6"/></svg>
<svg class="ic" style="left:1547.1px;top:750.7px;width:17px;height:17px" viewBox="0 0 24 24" fill="none" stroke="#0d4a87" stroke-width="2" stroke-linecap="round" stroke-linejoin="round"><path d="M14 3v4a1 1 0 0 0 1 1h4"/><path d="M11.5 21h-4.5a2 2 0 0 1 -2 -2v-14a2 2 0 0 1 2 -2h7l5 5v5m-5 6h7m-3 -3l3 3l-3 3"/></svg>
<svg class="ic" style="left:1588.2px;top:750.7px;width:17px;height:17px" viewBox="0 0 24 24" fill="none" stroke="#0d4a87" stroke-width="2" stroke-linecap="round" stroke-linejoin="round"><path d="M14 3v4a1 1 0 0 0 1 1h4"/><path d="M5 12v-7a2 2 0 0 1 2 -2h7l5 5v4"/><path d="M4 15l4 6"/><path d="M4 21l4 -6"/><path d="M19 15v6h3"/><path d="M11 21v-6l2.5 3l2.5 -3v6"/></svg>
<div class="hl" style="top:787px"></div>
<div class="cb" style="top:804px"></div>
<div class="t" style="left:322px;top:802.0px;font-size:14px;line-height:20px;color:#282828;font-weight:normal;letter-spacing:0.33px">INV/000008</div>
<div class="t" style="left:513px;top:802.0px;font-size:14px;line-height:20px;color:#282828;font-weight:normal;letter-spacing:0.05px">Marketing IT Place</div>
<div class="t" style="left:704px;top:802.0px;font-size:14px;line-height:20px;color:#282828;font-weight:normal;">25-02-2025</div>
<div class="t" style="left:895.5px;top:802.0px;font-size:14px;line-height:20px;color:#282828;font-weight:normal;letter-spacing:0.1px">14-05-2025</div>
<div class="t" style="right:411px;top:802.0px;font-size:14px;line-height:20px;color:#282828;font-weight:normal;">1.695,85 €</div>
<div class="t" style="right:219.5px;top:802.0px;font-size:14px;line-height:20px;color:#282828;font-weight:normal;">1.695,85 €</div>
<svg class="ic" style="left:1504px;top:804px;width:18px;height:18px" viewBox="0 0 24 24" fill="none" stroke="#0d4a87" stroke-width="2" stroke-linecap="round" stroke-linejoin="round"><path d="M3 9l9 6l9 -6l-9 -6l-9 6"/><path d="M21 9v10a2 2 0 0 1 -2 2h-14a2 2 0 0 1 -2 -2v-10"/><path d="M3 19l6 -6"/><path d="M15 13l6 6"/></svg>
<svg class="ic" style="left:1547.1px;top:802.7px;width:17px;height:17px" viewBox="0 0 24 24" fill="none" stroke="#0d4a87" stroke-width="2" stroke-linecap="round" stroke-linejoin="round"><path d="M14 3v4a1 1 0 0 0 1 1h4"/><path d="M11.5 21h-4.5a2 2 0 0 1 -2 -2v-14a2 2 0 0 1 2 -2h7l5 5v5m-5 6h7m-3 -3l3 3l-3 3"/></svg>
<svg class="ic" style="left:1588.2px;top:802.7px;width:17px;height:17px" viewBox="0 0 24 24" fill="none" stroke="#0d4a87" stroke-width="2" stroke-linecap="round" stroke-linejoin="round"><path d="M14 3v4a1 1 0 0 0 1 1h4"/><path d="M5 12v-7a2 2 0 0 1 2 -2h7l5 5v4"/><path d="M4 15l4 6"/><path d="M4 21l4 -6"/><path d="M19 15v6h3"/><path d="M11 21v-6l2.5 3l2.5 -3v6"/></svg>
<div class="hl" style="top:839px"></div>
</div>
<div id="pomoc"><span>Pomoc</span></div>
<div id="pomocc"><svg viewBox="0 0 24 24" style="position:absolute;left:10.5px;top:11px;width:20px;height:20px" fill="none" stroke="#fff" stroke-width="1.6" stroke-linecap="round" stroke-linejoin="round"><path d="M16.5 10c3.038 0 5.5 2.015 5.5 4.5c0 1.397 -.778 2.645 -2 3.47l0 2.03l-1.964 -1.178a6.649 6.649 0 0 1 -1.536 .178c-3.038 0 -5.5 -2.015 -5.5 -4.5s2.462 -4.5 5.5 -4.5z"/><path d="M11.197 15.698c-.69 .196 -1.43 .302 -2.197 .302a8.008 8.008 0 0 1 -2.612 -.432l-2.388 1.432v-2.801c-1.237 -1.082 -2 -2.564 -2 -4.199c0 -3.314 3.134 -6 7 -6c3.782 0 6.863 2.57 7 5.785l0 .233"/><path d="M10 8h.01"/><path d="M7 8h.01"/><path d="M15 14h.01"/><path d="M18 14h.01"/></svg></div>
</body></html>
